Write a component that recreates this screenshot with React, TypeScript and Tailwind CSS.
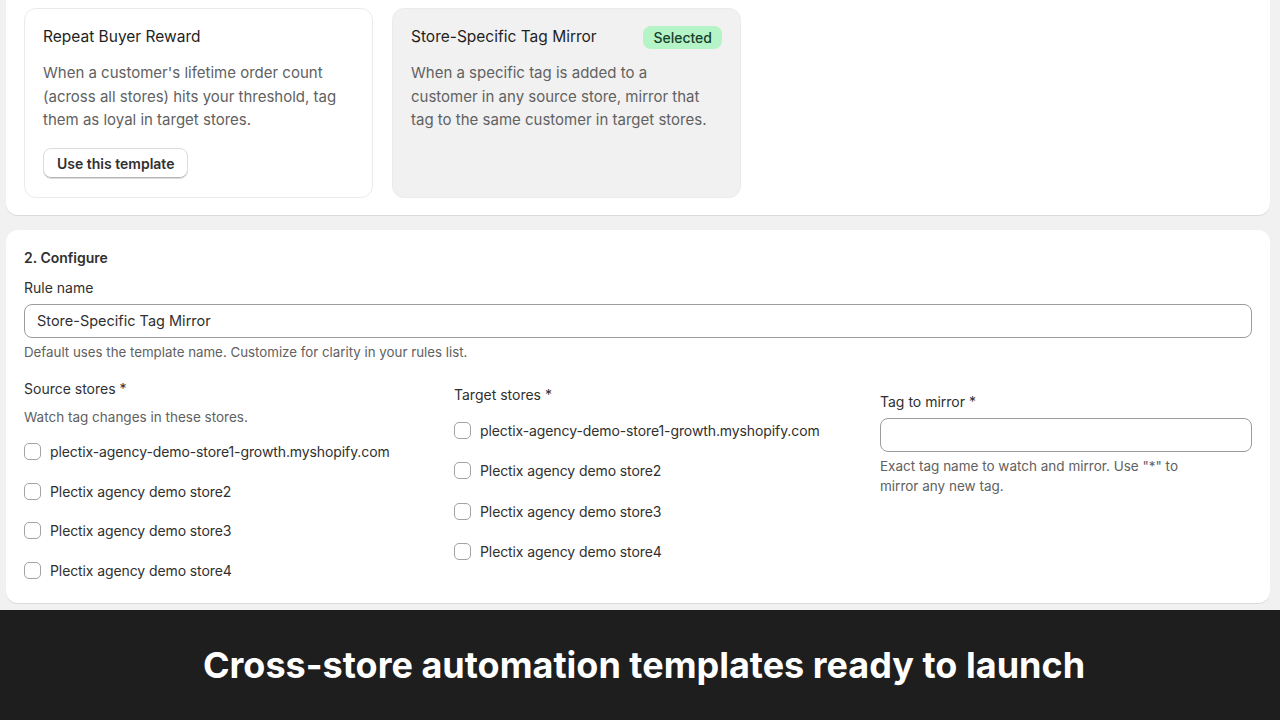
import { FC, ReactNode } from 'react';

const stores = [
    'plectix-agency-demo-store1-growth.myshopify.com',
    'Plectix agency demo store2',
    'Plectix agency demo store3',
    'Plectix agency demo store4',
];

const Checkbox: FC<{ label: string }> = ({ label }) => (
    <label className="flex items-center gap-[9px] h-5">
        <span className="w-[17px] h-[17px] rounded-[5px] border border-[#a3a3a3] bg-white shrink-0"></span>
        <span className="text-[14px] tracking-[-0.1px] text-[#303030]">{label}</span>
    </label>
);

const TemplateCard: FC<{ title: string; body: ReactNode; selected?: boolean }> = ({ title, body, selected }) => (
    <div
        className={`w-[349px] rounded-xl border px-[18px] pt-[18px] pb-[18px] flex flex-col ${
            selected ? 'bg-[#f1f1f1] border-[#ebebeb]' : 'bg-white border-[#ebebeb]'
        }`}
    >
        <div className="flex items-center justify-between h-5">
            <h3 className="text-[15.5px] font-normal text-[#1f1f1f]">{title}</h3>
            {selected && (
                <span className="h-[23px] px-[10px] flex items-center rounded-lg bg-[#b4f4c6] text-[14px] font-medium text-[#17402a]">
                    Selected
                </span>
            )}
        </div>
        <p className="mt-[14px] text-[15px] leading-[23.5px] text-[#616161]">{body}</p>
        {!selected && (
            <button className="mt-4 self-start h-[31px] px-[13px] rounded-lg bg-white border border-[#dcdcdc] shadow-[inset_0_-1px_0_#b5b5b5] text-[14px] font-semibold text-[#303030]">
                Use this template
            </button>
        )}
    </div>
);

export default function App() {
    return (
        <div
            className="w-[1280px] h-[720px] overflow-hidden bg-[#f1f1f1] flex flex-col"
            style={{ fontFamily: 'Inter, "Noto Sans", sans-serif' }}
        >
            <div className="flex-1 pl-[6px] pr-[10px] flex flex-col">
                {/* 1. Templates (cut off at top) */}
                <div className="bg-white rounded-b-xl shadow-[0_1px_0_#dadada] px-[18px] pt-2 pb-[17px] flex gap-[19px]">
                    <TemplateCard
                        title="Repeat Buyer Reward"
                        body="When a customer's lifetime order count (across all stores) hits your threshold, tag them as loyal in target stores."
                    />
                    <TemplateCard
                        selected
                        title="Store-Specific Tag Mirror"
                        body={
                            <>
                                When a specific tag is added to a<br />
                                customer in any source store, mirror that<br />
                                tag to the same customer in target stores.
                            </>
                        }
                    />
                </div>

                {/* 2. Configure */}
                <div className="mt-[15px] bg-white rounded-xl shadow-[0_1px_0_#dadada] px-[18px] pt-[18px] pb-[22px]">
                    <h2 className="text-[14px] leading-5 font-semibold text-[#303030]">2. Configure</h2>
                    <div className="mt-[10px] text-[14px] leading-5 text-[#303030]">Rule name</div>
                    <div className="mt-[6px] h-[34px] rounded-lg border border-[#9c9c9c] flex items-center px-3 text-[14.5px] text-[#303030]">
                        Store-Specific Tag Mirror
                    </div>
                    <p className="mt-[5px] text-[13.3px] leading-[18px] text-[#616161]">
                        Default uses the template name. Customize for clarity in your rules list.
                    </p>

                    <div className="mt-[18px] flex items-start">
                        <div className="w-[430px] shrink-0">
                            <div className="text-[14px] leading-5 text-[#303030]">Source stores *</div>
                            <p className="mt-[9px] text-[13.5px] leading-[18px] text-[#616161]">Watch tag changes in these stores.</p>
                            <div className="mt-4 flex flex-col gap-[19.7px]">
                                {stores.map(s => (
                                    <Checkbox key={s} label={s} />
                                ))}
                            </div>
                        </div>
                        <div className="w-[426px] shrink-0 pt-[6px]">
                            <div className="text-[14px] leading-5 text-[#303030]">Target stores *</div>
                            <div className="mt-4 flex flex-col gap-[20.3px]">
                                {stores.map(s => (
                                    <Checkbox key={s} label={s} />
                                ))}
                            </div>
                        </div>
                        <div className="flex-1 pt-[13px]">
                            <div className="text-[14px] leading-5 text-[#303030]">Tag to mirror *</div>
                            <div className="mt-[6px] h-[34px] rounded-lg border border-[#9c9c9c] bg-white"></div>
                            <p className="mt-1 text-[13.5px] leading-5 text-[#616161] w-[320px]">
                                Exact tag name to watch and mirror. Use "*" to mirror any new tag.
                            </p>
                        </div>
                    </div>
                </div>
            </div>

            {/* Caption band */}
            <div className="h-[110px] shrink-0 bg-[#1e1e1e] flex items-center justify-center pl-[8px]">
                <span className="text-white text-[36px] font-bold leading-none">
                    Cross-store automation templates ready to launch
                </span>
            </div>
        </div>
    );
}
